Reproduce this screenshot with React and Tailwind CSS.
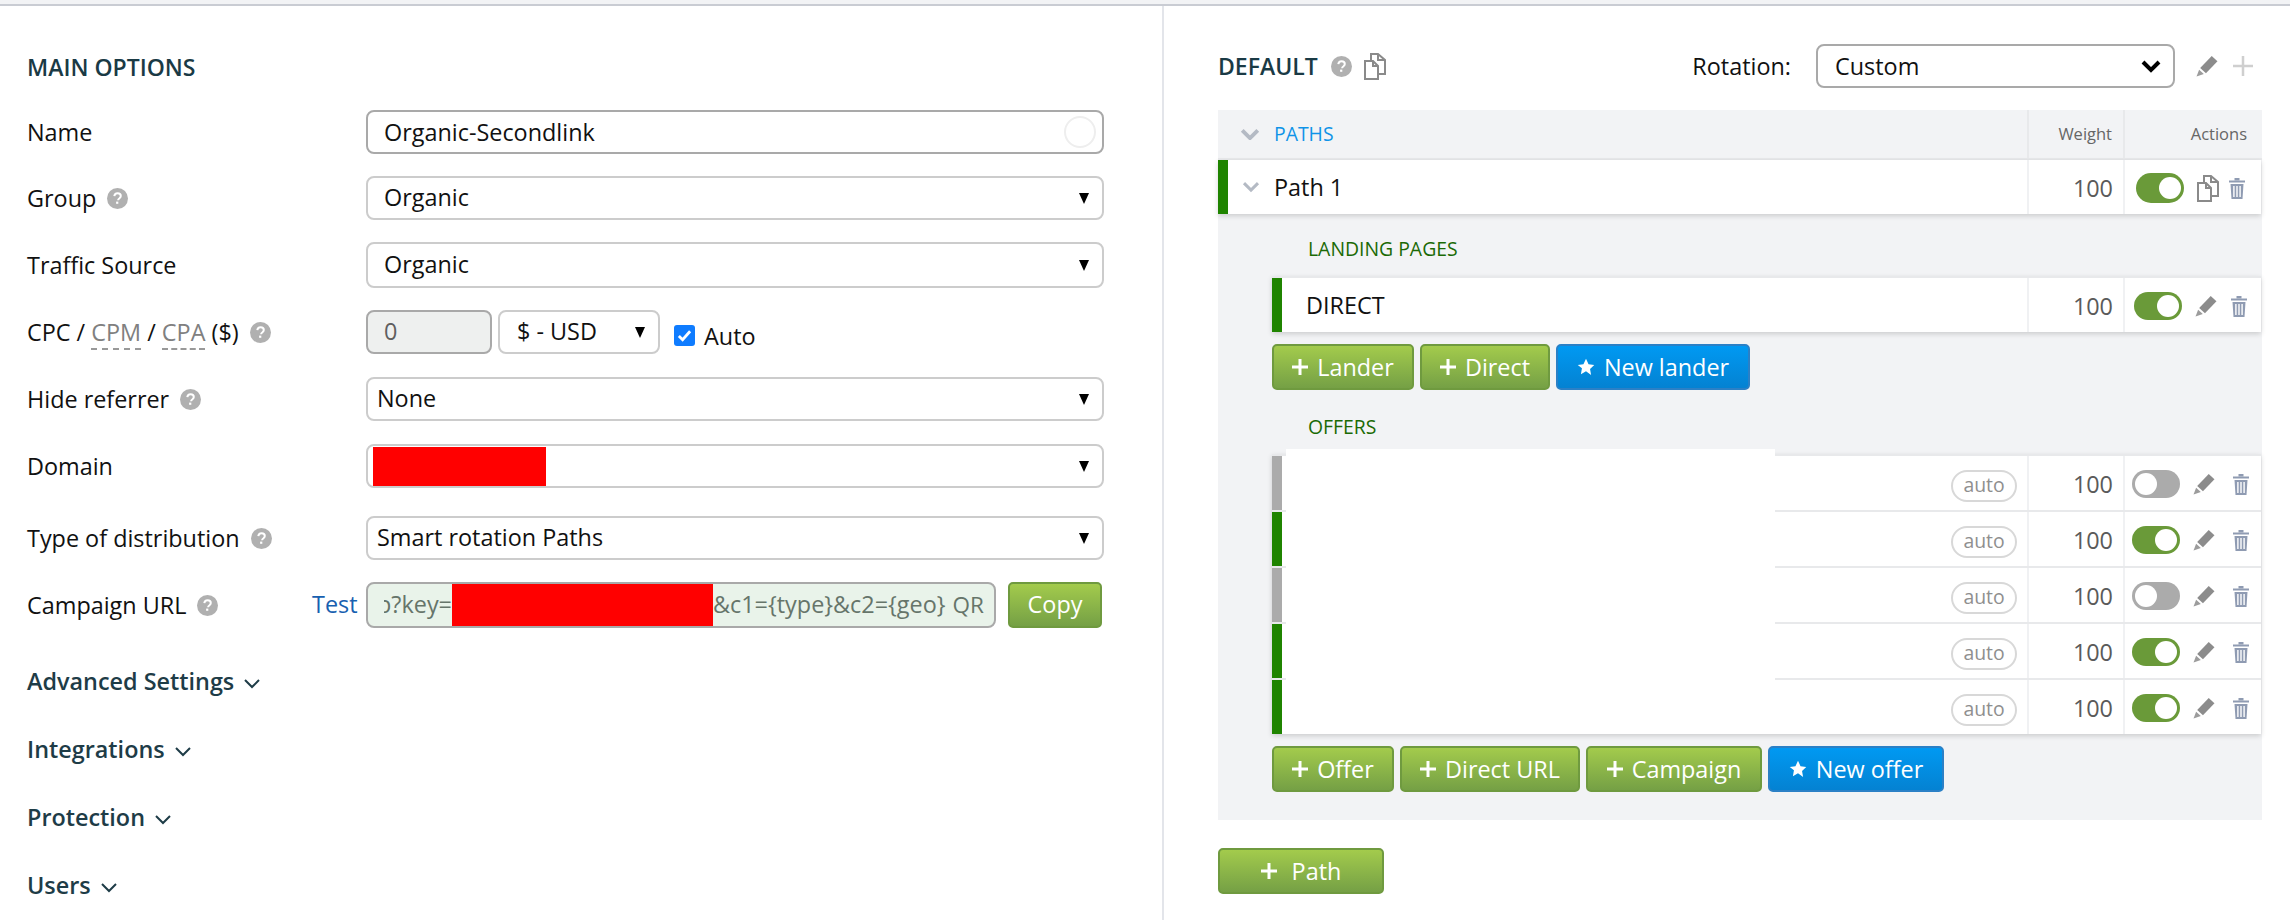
import React from "react";

const Help = () => (
  <svg width="21" height="21" viewBox="0 0 21 21" className="shrink-0">
    <circle cx="10.5" cy="10.5" r="10.5" fill="#b0b0b0" />
    <path d="M7.3 8.2c.2-1.9 1.5-2.9 3.3-2.9 1.9 0 3.2 1.1 3.2 2.7 0 1.3-.7 1.9-1.6 2.5-.8.5-1.1.9-1.1 1.7" fill="none" stroke="#fff" strokeWidth="2" />
    <rect x="9.1" y="13.6" width="2.2" height="2.2" fill="#fff" />
  </svg>
);

const Chevron = ({ className = "", size = 18, color = "#1e3c47", w = 2 }) => (
  <svg width={size} height={size * 0.62} viewBox="0 0 18 11" className={className}>
    <path d="M2 2l7 7 7-7" fill="none" stroke={color} strokeWidth={w} />
  </svg>
);

const CopyIcon = () => (
  <svg width="22" height="27" viewBox="0 0 22 27" fill="none" stroke="#8a8a8a" strokeWidth="2">
    <path d="M1 8h8l5 5v13H1z" />
    <path d="M9 8v5h5" />
    <path d="M7 8V1h7l7 6v14h-7" />
    <path d="M14 1v6h7" />
  </svg>
);

const Pencil = () => (
  <svg width="22" height="22" viewBox="0 0 21 21">
    <path d="M15 1l5.5 5L9.5 17.5 4 12.5z" fill="#8c8c8c" />
    <path d="M3 14l4.5 4.2L.5 20.5z" fill="#9c9c9c" />
  </svg>
);

const Trash = () => (
  <svg width="16" height="21" viewBox="0 0 16 21" fill="#8f9bb2">
    <rect x="0" y="2.5" width="16" height="2" />
    <rect x="5.5" y="0" width="5" height="2.5" />
    <path d="M1.5 6h13l-1 15h-11zM4.2 8v11h1.4V8zM7.3 8v11h1.4V8zM10.4 8v11h1.4V8z" fillRule="evenodd" />
  </svg>
);

const Toggle = ({ on, h = "h-[28px]" }) => (
  <div className={`w-[48px] ${h} rounded-full flex items-center shrink-0 px-[3px] ${on ? "bg-[#6a9a39] justify-end" : "bg-[#ababab] justify-start"}`}>
    <div className="w-[22px] h-[22px] rounded-full bg-white" />
  </div>
);

const Arrow = () => <span className="w-0 h-0 border-x-[5px] border-x-transparent border-t-[11px] border-t-black shrink-0" />;

const Select = ({ children, pl = "pl-[16px]", h = "h-[44px]" }) => (
  <div className={`flex-1 ${h} flex items-center justify-between border-2 border-[#cccccc] rounded-[8px] bg-white pr-[13px] ${pl}`}>
    <div className="flex items-center">{children}</div>
    <Arrow />
  </div>
);

const FormRow = ({ label, help, children, mb = "mb-[22px]", h = "h-[44px]" }) => (
  <div className={`flex items-center ${h} ${mb}`}>
    <div className="w-[339px] flex items-center gap-[11px] shrink-0 pt-[2px]">
      <span>{label}</span>
      {help && <Help />}
    </div>
    {children}
  </div>
);

const Section = ({ label }) => (
  <div className="h-[68px] flex items-center gap-[9px] font-semibold text-[#1e3c47]">
    {label}
    <Chevron className="mt-[3px]" />
  </div>
);

const Btn = ({ blue, icon = "+", w, children }) => (
  <div className={`h-[46px] ${w} flex items-center justify-center gap-[9px] rounded-[5px] border-2 text-white text-[23.4px] bg-gradient-to-b ${blue ? "from-[#0099f2] to-[#0482d2] border-[#2b80c6]" : "from-[#a3cb4c] to-[#75a045] border-[#6f9a3f]"}`}>
    {icon === "star" ? (
      <svg width="18" height="18" viewBox="0 0 24 24" fill="#fff">
        <path d="M12 1l3.4 7.3 7.6 1-5.6 5.4 1.4 7.8L12 17.8l-6.8 3.7 1.4-7.8L1 9.3l7.6-1z" />
      </svg>
    ) : (
      <svg width="16" height="16" viewBox="0 0 16 16" stroke="#fff" strokeWidth="3">
        <path d="M8 0v16M0 8h16" />
      </svg>
    )}
    <span className="pt-[2px]">{children}</span>
  </div>
);

const Row = ({ bar = "border-l-[#1f8400]", on = true, name, auto, icon, chevron, h = "h-[56px]", border = true, toggleH, cellPl = "pl-[7px]", cellPr = "pr-[12px]" }) => (
  <div className={`flex bg-white ${h} ${border ? "border-t-2 border-[#e8e9eb]" : ""}`}>
    <div className={`flex-1 flex items-center border-l-[10px] ${bar}`}>
      {chevron && <Chevron className="ml-[14px] mr-[14px]" size={18} color="#b4bac4" w={3} />}
      {name && <span className={chevron ? "pt-[1px]" : "ml-[24px] pt-[1px]"}>{name}</span>}
      {auto && (
        <span className="ml-auto mr-[10px] mt-[5px] w-[66px] h-[32px] flex items-center justify-center rounded-full border-2 border-[#d8d8d8] text-[#8f8f8f] text-[19.4px] leading-none pb-[2px]">auto</span>
      )}
    </div>
    <div className="w-[96px] border-l-2 border-[#f0f1f3] flex items-center justify-end pr-[10px] pt-[3px] text-[#5a5a5a]">100</div>
    <div className={`w-[138px] border-l-2 border-[#f0f1f3] flex items-center pt-[2px] ${cellPl}`}>
      <Toggle on={on} h={toggleH} />
      <div className={`flex flex-1 items-center justify-between pl-[13px] ${cellPr}`}>
        {icon === "copy" ? <CopyIcon /> : <Pencil />}
        <Trash />
      </div>
    </div>
  </div>
);

export default function App() {
  return (
    <div className="w-[2290px] h-[920px] overflow-hidden bg-white text-[#111] text-[23.4px] font-['Open_Sans',sans-serif]">
      <div className="h-[6px] bg-[#f2f3f5] border-b-2 border-[#c9ccd3]" />
      <div className="flex h-[914px]">
        {/* left column */}
        <div className="w-[1162px] pl-[27px] pr-[58px] shrink-0">
          <div className="h-[104px] flex items-center font-semibold text-[#1a3a45] text-[23px] pt-[18px]">MAIN OPTIONS</div>

          <FormRow label="Name">
            <div className="flex-1 h-[44px] flex items-center justify-between border-2 border-[#a9a9a9] rounded-[8px] pl-[16px] pr-[6px]">
              <span className="pt-[2px]">Organic-Secondlink</span>
              <div className="w-[32px] h-[32px] rounded-full border-2 border-[#eeeeee]" />
            </div>
          </FormRow>
          <FormRow label="Group" help>
            <Select>Organic</Select>
          </FormRow>
          <FormRow label="Traffic Source" h="h-[46px]">
            <Select h="h-[46px]">Organic</Select>
          </FormRow>
          <FormRow label={<>CPC / <span className="text-[#808080] border-b-2 border-dashed border-[#999]">CPM</span> / <span className="text-[#808080] border-b-2 border-dashed border-[#999]">CPA</span> ($)</>} help mb="mb-[23px]">
            <div className="w-[126px] h-[44px] flex items-center pl-[16px] border-2 border-[#a9a9a9] rounded-[8px] bg-[#eef0ef] text-[#5f5f5f]">0</div>
            <div className="ml-[6px] w-[162px] h-[44px] flex items-center justify-between border-2 border-[#cccccc] rounded-[8px] pl-[17px] pr-[13px]">
              <span>$ - USD</span>
              <Arrow />
            </div>
            <div className="ml-[14px] flex items-center gap-[9px] mt-[6px]">
              <div className="w-[21px] h-[21px] rounded-[3px] bg-[#0f7cff] flex items-center justify-center">
                <svg width="15" height="15" viewBox="0 0 16 16" fill="none" stroke="#fff" strokeWidth="3">
                  <path d="M2 8.5l4 4 8-9" />
                </svg>
              </div>
              <span className="pt-[3px]">Auto</span>
            </div>
          </FormRow>
          <FormRow label="Hide referrer" help mb="mb-[23px]">
            <Select pl="pl-[9px]">None</Select>
          </FormRow>
          <FormRow label="Domain" mb="mb-[28px]">
            <Select pl="pl-[5px]">
              <div className="w-[173px] h-[39px] bg-[#ff0000]" />
            </Select>
          </FormRow>
          <FormRow label="Type of distribution" help>
            <Select pl="pl-[9px]">Smart rotation Paths</Select>
          </FormRow>
          <div className="flex items-center h-[46px] mb-[20px]">
            <div className="w-[285px] flex items-center gap-[11px] shrink-0 pt-[1px]">
              <span>Campaign URL</span>
              <Help />
            </div>
            <a className="w-[54px] text-[#1760b0]">Test</a>
            <div className="w-[630px] h-[46px] flex items-center border-2 border-[#a9a9a9] rounded-[8px] bg-[#e9f3ea] text-[#66756a] pl-[16px] overflow-hidden shrink-0">
              <div className="w-[68px] flex justify-end overflow-hidden shrink-0 whitespace-nowrap">p?key=</div>
              <div className="w-[261px] h-[42px] bg-[#ff0000] shrink-0" />
              <span className="whitespace-nowrap">&amp;c1={"{type}"}&amp;c2={"{geo}"}</span>
              <span className="ml-[7px] text-[22.5px]">QR</span>
            </div>
            <div className="ml-[12px] w-[94px] h-[46px] flex items-center justify-center rounded-[5px] border-2 border-[#6f9a3f] text-white bg-gradient-to-b from-[#a3cb4c] to-[#75a045]">Copy</div>
          </div>

          <Section label="Advanced Settings" />
          <Section label="Integrations" />
          <Section label="Protection" />
          <Section label="Users" />
        </div>

        <div className="w-[2px] bg-[#e3e5ea] shrink-0" />

        {/* right column */}
        <div className="flex-1 pl-[54px] pr-[28px] pt-[38px]">
          <div className="h-[44px] flex items-center mb-[22px]">
            <span className="font-semibold text-[#1a3a45] text-[23px]">DEFAULT</span>
            <div className="ml-[13px] mr-[12px]"><Help /></div>
            <CopyIcon />
            <span className="ml-auto pt-[2px]">Rotation:</span>
            <div className="ml-[25px] w-[359px] h-[44px] flex items-center justify-between border-2 border-[#a9a9a9] rounded-[8px] pl-[17px] pr-[12px]">
              <span className="pt-[2px]">Custom</span>
              <svg width="20" height="13" viewBox="0 0 20 13" fill="none" stroke="#000" strokeWidth="4">
                <path d="M2 2l8 8 8-8" />
              </svg>
            </div>
            <div className="ml-[21px]"><Pencil /></div>
            <svg width="20" height="20" viewBox="0 0 20 20" stroke="#cfcfcf" strokeWidth="2.5" className="ml-[15px] mr-[9px]">
              <path d="M10 0v20M0 10h20" />
            </svg>
          </div>

          <div className="bg-[#f2f3f5] pb-[28px]">
            <div className="flex h-[50px] border-b-2 border-[#e8e9eb] text-[16.5px] text-[#666]">
              <div className="flex-1 flex items-center pl-[22px] gap-[14px]">
                <Chevron size={20} color="#b4bac4" w={3.5} />
                <span className="text-[#0f93e8] text-[19.4px]">PATHS</span>
              </div>
              <div className="w-[96px] border-l-2 border-[#e8e9eb] flex items-center justify-end pr-[11px]">Weight</div>
              <div className="w-[139px] border-l-2 border-[#e8e9eb] flex items-center justify-end pr-[15px]">Actions</div>
            </div>

            <div className="mr-[1px] shadow-[0_2px_5px_rgba(0,0,0,0.16)]">
              <Row name="Path 1" chevron icon="copy" border={false} h="h-[54px]" toggleH="h-[30px]" cellPl="pl-[11px]" cellPr="pr-[16px]" />
            </div>

            <div className="pl-[54px]">
              <div className="h-[62px] flex items-center pl-[36px] pt-[8px] text-[19.4px] text-[#1b6a05]">LANDING PAGES</div>
              <div className="mr-[1px] shadow-[0_2px_5px_rgba(0,0,0,0.16)]">
                <Row name="DIRECT" cellPl="pl-[9px]" cellPr="pr-[14px]" />
              </div>
              <div className="flex gap-[6px] mt-[12px]">
                <Btn w="w-[142px]">Lander</Btn>
                <Btn w="w-[130px]">Direct</Btn>
                <Btn blue icon="star" w="w-[194px]">New lander</Btn>
              </div>

              <div className="h-[64px] flex items-center pl-[36px] pt-[10px] text-[19.4px] text-[#1b6a05]">OFFERS</div>
              <div className="relative mr-[1px] shadow-[0_2px_5px_rgba(0,0,0,0.16)]">
                <Row auto on={false} bar="border-l-[#ababab]" />
                <Row auto />
                <Row auto on={false} bar="border-l-[#ababab]" />
                <Row auto />
                <Row auto />
                {/* blanked out offer names */}
                <div className="absolute left-[14px] top-[-5px] w-[489px] h-[232px] bg-white" />
              </div>
              <div className="flex gap-[6px] mt-[12px]">
                <Btn w="w-[122px]">Offer</Btn>
                <Btn w="w-[180px]">Direct URL</Btn>
                <Btn w="w-[176px]">Campaign</Btn>
                <Btn blue icon="star" w="w-[176px]">New offer</Btn>
              </div>
            </div>
          </div>

          <div className="mt-[28px]">
            <Btn w="w-[166px]"><span className="ml-[6px]">Path</span></Btn>
          </div>
        </div>
      </div>
    </div>
  );
}
